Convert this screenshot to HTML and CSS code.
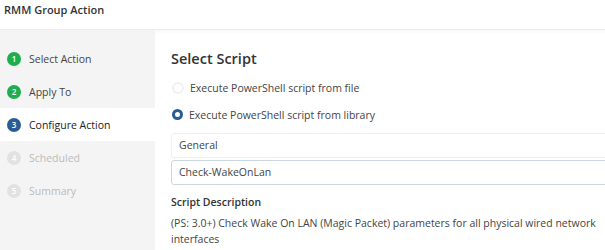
FILE: index.html
```html
<!DOCTYPE html>
<html lang="en">
<head>
  <meta charset="UTF-8">
  <title>RMM Group Action</title>
  <link rel="stylesheet" href="styles.css">
</head>
<body>
  <div class="dialog">
    <div class="dialog-header">RMM Group Action</div>
    <div class="dialog-body">
      <ul class="steps">
        <li class="step done"><span class="num">1</span>Select Action</li>
        <li class="step done"><span class="num">2</span>Apply To</li>
        <li class="step active"><span class="num">3</span>Configure Action</li>
        <li class="step"><span class="num">4</span>Scheduled</li>
        <li class="step"><span class="num">5</span>Summary</li>
      </ul>
      <div class="content">
        <h2>Select Script</h2>
        <label class="radio"><span class="dot"></span>Execute PowerShell script from file</label>
        <label class="radio checked"><span class="dot"></span>Execute PowerShell script from library</label>
        <div class="field">General</div>
        <div class="field focused">Check-WakeOnLan</div>
        <h3>Script Description</h3>
        <p class="desc">(PS: 3.0+) Check Wake On LAN (Magic Packet) parameters for all physical wired network interfaces</p>
      </div>
    </div>
  </div>
</body>
</html>
```

FILE: styles.css
```css
body {
  margin: 0;
  font-family: "Open Sans", Arial, sans-serif;
  color: #333;
  background: #fff;
  overflow: hidden;
}
.dialog {
  width: 640px;
  height: 250px;
}
.dialog-header {
  height: 29px;
  line-height: 20px;
  padding-left: 4px;
  font-size: 11px;
  font-weight: 600;
  color: #333;
  border-bottom: 1px solid #ececec;
  box-shadow: 0 2px 4px rgba(0, 0, 0, 0.03);
}
.dialog-body {
  display: flex;
  height: 220px;
}
.steps {
  list-style: none;
  margin: 0;
  padding: 12px 0 0;
  width: 155px;
  background: #f4f4f4;
  flex-shrink: 0;
}
.step {
  display: flex;
  align-items: center;
  height: 33px;
  padding-left: 7px;
  font-size: 10.5px;
  color: #bbb;
}
.step .num {
  width: 14px;
  height: 14px;
  border-radius: 50%;
  background: #e2e2e2;
  color: #fff;
  font-size: 8px;
  font-weight: 600;
  display: flex;
  align-items: center;
  justify-content: center;
  margin-right: 8px;
}
.step.done {
  color: #444;
}
.step.done .num {
  background: #1fae4f;
}
.step.active {
  background: #fff;
  color: #222;
}
.step.active .num {
  background: #2c5d92;
}
.content {
  flex: 1;
  padding: 19px 0 0 16px;
}
h2 {
  margin: 0 0 6px;
  font-size: 14.5px;
  font-weight: 600;
  color: #333;
}
.radio {
  display: flex;
  align-items: center;
  height: 27px;
  font-size: 10.5px;
  color: #444;
}
.radio .dot {
  width: 8px;
  height: 8px;
  border: 2px solid #f0f0f0;
  border-radius: 50%;
  margin: 0 6px 0 1px;
}
.radio.checked .dot {
  border: 3.5px solid #2c5d92;
  width: 5px;
  height: 5px;
}
.field {
  height: 23px;
  line-height: 23px;
  margin-top: 5px;
  padding-left: 7px;
  border: 1px solid #eeeeee;
  border-radius: 3px;
  font-size: 10.5px;
  color: #444;
}
.field.focused {
  margin-top: 2px;
  border-color: #cbd7e3;
}
h3 {
  margin: 10px 0 0;
  font-size: 10.5px;
  font-weight: 600;
  color: #333;
}
.desc {
  margin: 6px 0 0;
  font-size: 10.5px;
  line-height: 16px;
  color: #444;
  width: 440px;
}
```
